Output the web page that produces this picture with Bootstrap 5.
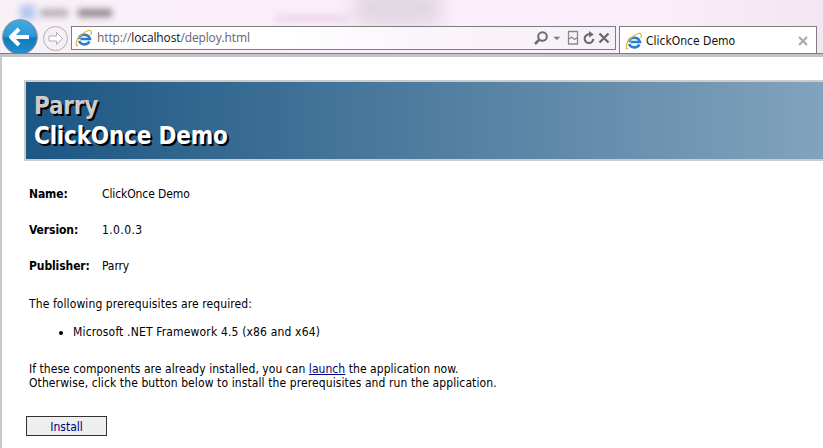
<!DOCTYPE html>
<html lang="en"><head><meta charset="utf-8"><title>ClickOnce Demo</title>
<link href="https://cdn.jsdelivr.net/npm/bootstrap@5.3.0/dist/css/bootstrap.min.css" rel="stylesheet">
<style>
html,body{height:100%;overflow:hidden}
body{font-family:"DejaVu Sans Condensed","DejaVu Sans",sans-serif;font-size:12px;color:#000;background:#fff}
.chrome{height:54px;position:relative;overflow:hidden;background:linear-gradient(90deg,#f7f1f6 0,#fbeefb 30%,#fbeefb 80%,#f3e6f2 100%);border-bottom:1px solid #7e7e7e;padding:26px 0 0 2px}
.ghostlayer{position:absolute;left:0;top:0;width:100%;height:54px;filter:blur(3px)}
.gicon{position:absolute;left:20px;top:5px;width:15px;height:15px;background:#b6c8f0}
.gtext{position:absolute;top:9px;height:8px;background:#b8b0b8}
.gblob{position:absolute;left:355px;top:-10px;width:85px;height:36px;background:#e0d6e0;filter:blur(9px)}
.gpink{position:absolute;left:275px;top:15px;width:75px;height:7px;background:#ecd8ec}
.backbtn{width:36px;height:36px;flex:none;margin-top:-7px;position:relative}
.fwdbtn{width:25px;height:25px;flex:none;margin-left:5px;position:relative}
.addr{width:545px;height:24px;flex:none;margin-left:3px;background:linear-gradient(90deg,#fff 0,#fff 40%,#fbf6fb 60%,#f8f0f8 100%);border:1px solid #7e7e7e;padding:0 3px 0 3px;font-family:"Open Sans","DejaVu Sans",sans-serif;font-size:12px;letter-spacing:-.13px;color:#666;position:relative}
.addr b{font-weight:400;color:#111}
.tabx{width:198px;height:28px;flex:none;margin-left:3px;background:#fff;border:1px solid #7e7e7e;border-bottom:0;padding:0 5px;font-size:12px;color:#111;position:relative}
.ieicon{width:18px;height:18px;flex:none}
.urltxt{margin-left:4px}
.tool{width:16px;height:16px;flex:none}
.toolset{gap:0}
.tool.tg3{margin-left:3px}
.tool.tg4{margin-left:4px}
.tool.w11{width:11px}
.tool.w12{width:12px}
.tool.w14{width:14px}
.pagewrap{height:394px;border-left:2px solid #c8c8c8;border-top:3px solid #c4c4c4;padding:23px 0 0 22px}
.banner{height:81px;border:2px solid #ccc;border-right:0;background:linear-gradient(90deg,#1c5683,#82a3bc);padding:9px 0 0 8px;font-weight:700;font-size:24px;line-height:30px;letter-spacing:-.2px;font-family:"DejaVu Sans Condensed","DejaVu Sans",sans-serif}
.banner div:first-child{color:#ccc;text-shadow:2px 2px 0 #000}
.banner div:last-child{color:#fff;text-shadow:2px 2px 0 #000}
.infogrid{margin:24px 0 0 5px;letter-spacing:-.1px}
.inforow{height:36px}
.infokey{width:73px;font-weight:700}
.numtxt{letter-spacing:.4px}
.bodytxt{margin:0 0 0 5px;line-height:14px;letter-spacing:.1px}
.tightline{letter-spacing:.05px}
.reqlist{margin:14px 0 23px 5px;padding-left:44px;letter-spacing:.16px;line-height:14px}
.btnwrap{margin:26px 0 0 2px}
.instbtn{width:81px;height:20px;border:1px solid #333;border-radius:0;background:#eee;padding:1px 0 0;font-size:12px;line-height:18px;color:#000080}
a.lnk{color:#000080}
</style></head>
<body>
<div class="chrome d-flex align-items-start">
 <div class="gblob"></div>
 <div class="ghostlayer"><div class="gicon"></div><div class="gtext" style="left:40px;width:28px"></div><div class="gtext" style="left:78px;width:34px;background:#8f8a8f"></div><div class="gpink"></div></div>
 <svg class="backbtn" viewBox="0 0 36 36"><defs><linearGradient id="bg" x1="0" y1="0" x2="0" y2="1"><stop offset="0" stop-color="#46a9e0"/><stop offset=".5" stop-color="#2b97d8"/><stop offset=".52" stop-color="#0f79bd"/><stop offset="1" stop-color="#2391d0"/></linearGradient></defs><circle cx="18" cy="18" r="17.300" fill="url(#bg)" stroke="#7f8c97"/><path d="M9 18 H27 M17 10 L9 18 L17 26" fill="none" stroke="#fff" stroke-width="4" stroke-linejoin="round"/></svg>
 <svg class="fwdbtn" viewBox="0 0 25 25"><circle cx="12.500" cy="12.500" r="12" fill="#f6f0f6" stroke="#b0b0b0"/><path d="M19.500 12.500 L13.500 6.500 V10 H6 V15 H13.500 V18.500 Z" fill="#fff" stroke="#b0b0b0"/></svg>
 <div class="addr d-flex align-items-center">
  <svg class="ieicon" viewBox="0 0 18 18"><path d="M3.500 10 A6 6 0 0 1 15 10 H5.500 M14.500 12.500 A6 6 0 0 1 4 12" fill="none" stroke="#2a7fd2" stroke-width="2.600"/><path d="M1.500 15.500 C0 11 8 3 13 1.500 C17 .5 17 4 15.500 6 M3 16 C1 17.500 1 16.500 1.500 15.500" fill="none" stroke="#e8b52f" stroke-width="1.200"/></svg>
  <span class="urltxt">http://<b>localhost</b>/deploy.html</span>
  <div class="ms-auto d-flex align-items-center toolset">
   <svg class="tool" viewBox="0 0 16 16"><circle cx="9.500" cy="6.500" r="4.300" fill="none" stroke="#6b6b6b" stroke-width="2"/><path d="M6.300 9.700 L2 14" stroke="#6b6b6b" stroke-width="2.500"/></svg>
   <svg class="tool w11 tg3" viewBox="0 0 16 16"><path d="M2 6 H12 L7 11 Z" fill="#7a7a7a"/></svg>
   <svg class="tool w12 tg4" viewBox="0 0 12 16"><path d="M1.500 1.500 H10.500 V14 H1.500 Z M1.500 9.500 L4.500 7 L7.500 9.500 L10.500 7.500" fill="none" stroke="#8a8a8a" stroke-width="1.300"/></svg>
   <svg class="tool w14 tg3" viewBox="0 0 16 16"><path d="M13 9 A5 5 0 1 1 9 3.800" fill="none" stroke="#6b6b6b" stroke-width="2.400"/><path d="M8 0 L13.500 4 L8 7.500 Z" fill="#6b6b6b"/></svg>
   <svg class="tool" viewBox="0 0 16 16"><path d="M3.500 3.500 L12.500 12.500 M12.500 3.500 L3.500 12.500" stroke="#6b6b6b" stroke-width="2.400"/></svg>
  </div>
 </div>
 <div class="tabx d-flex align-items-center">
  <svg class="ieicon" viewBox="0 0 18 18"><path d="M3.500 10 A6 6 0 0 1 15 10 H5.500 M14.500 12.500 A6 6 0 0 1 4 12" fill="none" stroke="#2a7fd2" stroke-width="2.600"/><path d="M1.500 15.500 C0 11 8 3 13 1.500 C17 .5 17 4 15.500 6 M3 16 C1 17.500 1 16.500 1.500 15.500" fill="none" stroke="#e8b52f" stroke-width="1.200"/></svg>
  <span style="margin-left:3px">ClickOnce Demo</span>
  <svg class="tool ms-auto" viewBox="0 0 16 16"><path d="M4 4 L12 12 M12 4 L4 12" stroke="#aaa" stroke-width="2.200"/></svg>
 </div>
</div>
<div class="pagewrap">
 <div class="banner"><div>Parry</div><div>ClickOnce Demo</div></div>
 <div class="infogrid">
  <div class="inforow d-flex"><div class="infokey">Name:</div><div>ClickOnce Demo</div></div>
  <div class="inforow d-flex"><div class="infokey">Version:</div><div class="numtxt">1.0.0.3</div></div>
  <div class="inforow d-flex"><div class="infokey">Publisher:</div><div>Parry</div></div>
 </div>
 <p class="bodytxt" style="margin-top:4px">The following prerequisites are required:</p>
 <ul class="reqlist"><li>Microsoft .NET Framework 4.5 (x86 and x64)</li></ul>
 <p class="bodytxt"><span class="tightline">If these components are already installed, you can <a class="lnk" href="#">launch</a> the application now.</span><br>Otherwise, click the button below to install the prerequisites and run the application.</p>
 <div class="btnwrap"><button class="btn instbtn" type="button">Install</button></div>
</div>
<script src="https://cdn.jsdelivr.net/npm/bootstrap@5.3.0/dist/js/bootstrap.bundle.min.js"></script>
</body></html>
